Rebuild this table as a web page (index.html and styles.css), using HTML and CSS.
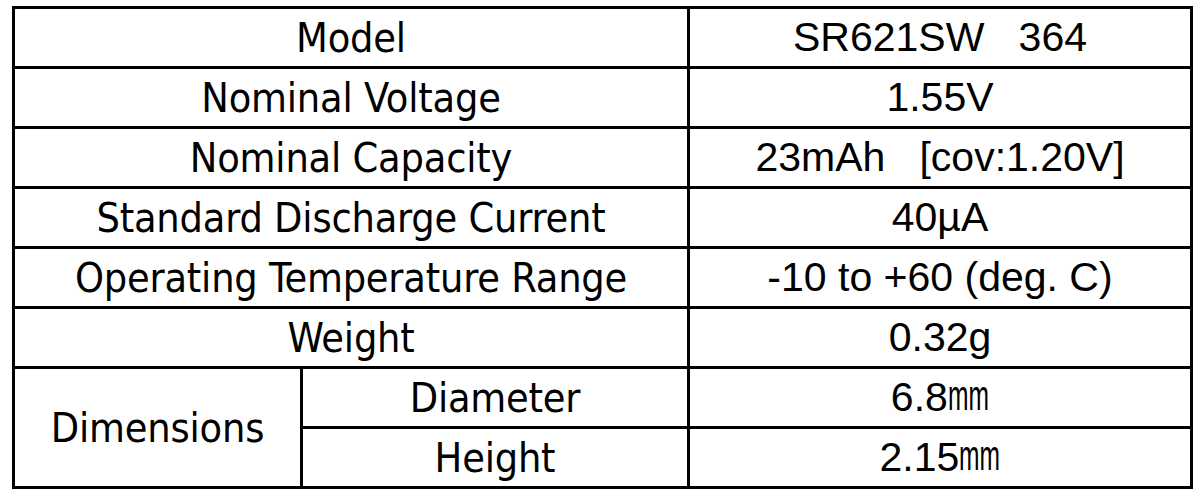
FILE: index.html
```html
<!DOCTYPE html>
<html>
<head>
<meta charset="utf-8">
<link rel="stylesheet" href="styles.css">
</head>
<body>
<div class="spec">
  <div class="cell label wide">Model</div>
  <div class="cell value">SR621SW   364</div>
  <div class="cell label wide">Nominal Voltage</div>
  <div class="cell value">1.55V</div>
  <div class="cell label wide">Nominal Capacity</div>
  <div class="cell value">23mAh   [cov:1.20V]</div>
  <div class="cell label wide">Standard Discharge Current</div>
  <div class="cell value">40µA</div>
  <div class="cell label wide">Operating Temperature Range</div>
  <div class="cell value">-10 to +60 (deg. C)</div>
  <div class="cell label wide">Weight</div>
  <div class="cell value">0.32g</div>
  <div class="cell label group">Dimensions</div>
  <div class="cell label">Diameter</div>
  <div class="cell value">6.8<span class="unit">mm</span></div>
  <div class="cell label">Height</div>
  <div class="cell value">2.15<span class="unit">mm</span></div>
</div>
</body>
</html>
```

FILE: styles.css
```css
html, body {
  margin: 0;
  padding: 0;
  background: #ffffff;
}

body {
  padding: 6px 0 0 12px;
}

.spec {
  display: grid;
  grid-template-columns: 285px 384px 500px;
  grid-auto-rows: 57px;
  gap: 3px;
  padding: 3px;
  width: max-content;
  background: #000000;
}

.cell {
  display: flex;
  align-items: center;
  justify-content: center;
  background: #ffffff;
  color: #000000;
  white-space: pre;
}

.label {
  font-family: "DejaVu Sans Condensed", "DejaVu Sans", sans-serif;
  font-stretch: condensed;
  font-size: 41px;
  letter-spacing: -0.2px;
}

.value {
  font-family: "Liberation Sans", Arial, sans-serif;
  font-size: 41px;
}

.wide {
  grid-column: 1 / span 2;
}

.group {
  grid-row: span 2;
}

.unit {
  display: inline-block;
  transform: scale(0.6, 1.05);
  transform-origin: left bottom;
  margin-right: -27px;
}
```
